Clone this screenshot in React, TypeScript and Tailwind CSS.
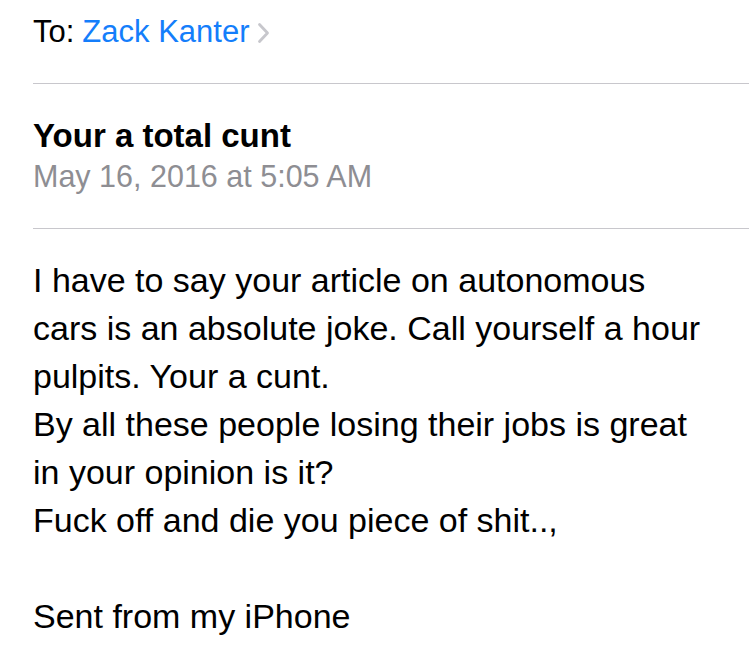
export default function App() {
  const body = [
    "I have to say your article on autonomous",
    "cars is an absolute joke. Call yourself a hour",
    "pulpits. Your a cunt.",
    "By all these people losing their jobs is great",
    "in your opinion is it?",
    "Fuck off and die you piece of shit..,",
    "\u00a0",
    "Sent from my iPhone",
  ];

  return (
    <div className="min-h-[666px] w-[749px] bg-white font-['Liberation_Sans',Arial,sans-serif] text-black">
      <div className="pl-[33px]">
        <div className="flex items-center pt-[14px] text-[31px] leading-[36px]">
          <span>To:</span>
          <span className="ml-[8px] text-[#147efb]">Zack Kanter</span>
          <svg className="ml-[8px] mt-[2px]" width="13" height="22" viewBox="0 0 13 22">
            <path d="M2.5 2.5 L10.5 11 L2.5 19.5" fill="none" stroke="#c7c7cc" strokeWidth="2.8" strokeLinecap="round" strokeLinejoin="round" />
          </svg>
        </div>
        <div className="mt-[33px] h-px bg-[#c8c7cc]" />
        <div className="mt-[33px] text-[33px] font-bold leading-[38px]">Your a total cunt</div>
        <div className="mt-[4px] text-[30.5px] leading-[34px] text-[#8e8e93]">May 16, 2016 at 5:05 AM</div>
        <div className="mt-[35px] h-px bg-[#c8c7cc]" />
        <div className="mt-[27px] text-[34px] leading-[48px]">
          {body.map((line, i) => (
            <div key={i} className="whitespace-nowrap">{line}</div>
          ))}
        </div>
      </div>
    </div>
  );
}
